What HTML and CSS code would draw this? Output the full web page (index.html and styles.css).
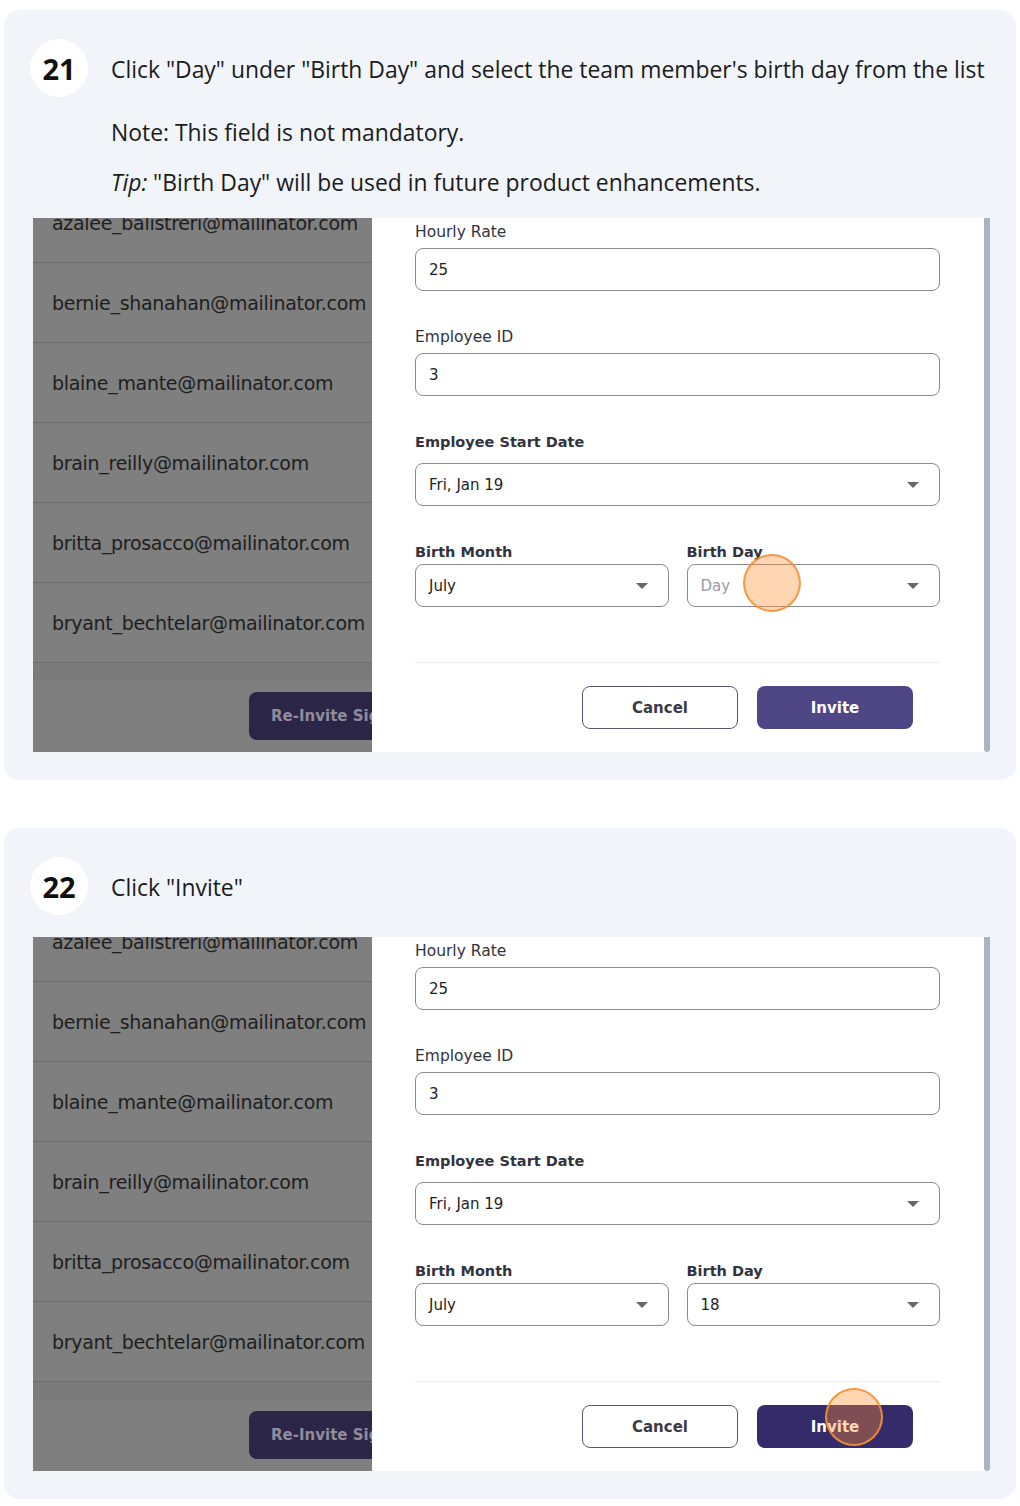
FILE: index.html
```html
<!DOCTYPE html>
<html lang="en">
<head>
    <meta charset="UTF-8">
    <meta name="viewport" content="width=device-width, initial-scale=1.0">
    <title>Invite Team Member - Guide</title>
    <link rel="stylesheet" href="styles.css">
</head>
<body>

    <!-- Step 21 -->
    <div class="step">
        <div class="step-head">
            <div class="step-num">21</div>
            <div class="step-text">
                <p>Click "Day" under "Birth Day" and select the team member's birth day from the list</p>
                <p class="note">Note: This field is not mandatory.</p>
                <p class="tip"><em>Tip:</em> "Birth Day" will be used in future product enhancements.</p>
            </div>
        </div>

        <div class="shot">
            <div class="member-list">
                <div class="member first">azalee_balistreri@mailinator.com</div>
                <div class="member">bernie_shanahan@mailinator.com</div>
                <div class="member">blaine_mante@mailinator.com</div>
                <div class="member">brain_reilly@mailinator.com</div>
                <div class="member">britta_prosacco@mailinator.com</div>
                <div class="member">bryant_bechtelar@mailinator.com</div>
                <div class="member-gap"></div>
                <div class="member-foot">
                    <button class="reinvite-btn">Re-Invite Signups</button>
                </div>
            </div>

            <div class="invite-form">
                <div class="field">
                    <label>Hourly Rate</label>
                    <div class="input">25</div>
                </div>
                <div class="field">
                    <label>Employee ID</label>
                    <div class="input">3</div>
                </div>
                <div class="field date">
                    <label>Employee Start Date</label>
                    <div class="input select">Fri, Jan 19</div>
                </div>
                <div class="field-row">
                    <div class="field">
                        <label>Birth Month</label>
                        <div class="input select">July</div>
                    </div>
                    <div class="field">
                        <label>Birth Day</label>
                        <div class="input select placeholder">Day</div>
                    </div>
                </div>
                <div class="form-actions">
                    <button class="cancel-btn">Cancel</button>
                    <button class="invite-btn">Invite</button>
                </div>
            </div>

            <div class="scrollbar"></div>

            <!-- click marker -->
            <div class="click-dot" style="left: 710px; top: 336px;"></div>
        </div>
    </div>

    <!-- Step 22 -->
    <div class="step">
        <div class="step-head">
            <div class="step-num">22</div>
            <div class="step-text">
                <p>Click "Invite"</p>
            </div>
        </div>

        <div class="shot">
            <div class="member-list">
                <div class="member first">azalee_balistreri@mailinator.com</div>
                <div class="member">bernie_shanahan@mailinator.com</div>
                <div class="member">blaine_mante@mailinator.com</div>
                <div class="member">brain_reilly@mailinator.com</div>
                <div class="member">britta_prosacco@mailinator.com</div>
                <div class="member">bryant_bechtelar@mailinator.com</div>
                <div class="member-gap"></div>
                <div class="member-foot">
                    <button class="reinvite-btn">Re-Invite Signups</button>
                </div>
            </div>

            <div class="invite-form">
                <div class="field">
                    <label>Hourly Rate</label>
                    <div class="input">25</div>
                </div>
                <div class="field">
                    <label>Employee ID</label>
                    <div class="input">3</div>
                </div>
                <div class="field date">
                    <label>Employee Start Date</label>
                    <div class="input select">Fri, Jan 19</div>
                </div>
                <div class="field-row">
                    <div class="field">
                        <label>Birth Month</label>
                        <div class="input select">July</div>
                    </div>
                    <div class="field">
                        <label>Birth Day</label>
                        <div class="input select">18</div>
                    </div>
                </div>
                <div class="form-actions">
                    <button class="cancel-btn">Cancel</button>
                    <button class="invite-btn hover">Invite</button>
                </div>
            </div>

            <div class="scrollbar"></div>

            <div class="click-dot" style="left: 792px; top: 451px;"></div>
        </div>
    </div>

</body>
</html>
```

FILE: styles.css
```css
/* Global styles */
* {
    box-sizing: border-box;
}

body {
    font-family: "Open Sans", Arial, sans-serif;
    background-color: #fff;
    margin: 0;
    padding: 10px 4px;
}

/* Step card */
.step {
    background-color: #f1f4f9;
    border-radius: 16px;
    padding: 29px 26px 28px 29px;
    margin-bottom: 48px;
}

.step-head {
    display: flex;
    align-items: flex-start;
    gap: 23px;
    margin-bottom: 19px;
}

.step-num {
    flex: none;
    width: 58px;
    height: 58px;
    margin: 0 0 3px -3px;
    border-radius: 50%;
    background-color: #fff;
    display: flex;
    align-items: center;
    justify-content: center;
    font-size: 29px;
    font-weight: 700;
    color: #111;
}

.step-text {
    padding-top: 15px;
}

.step-text p {
    margin: 0;
    font-size: 22.9px;
    line-height: 32px;
    color: #1b1b1b;
    white-space: nowrap;
}

.step-text .note {
    margin-top: 31px;
}

.step-text .tip {
    margin-top: 18px;
}

/* Screenshot of the app */
.shot {
    position: relative;
    display: flex;
    height: 534px;
    overflow: hidden;
    background-color: #fff;
    font-family: "DejaVu Sans", sans-serif;
}

/* Dimmed member list behind the modal */
.member-list {
    flex: none;
    width: 339px;
    background-color: #7f7f7f;
    display: flex;
    flex-direction: column;
}

.member {
    height: 80px;
    flex: none;
    border-bottom: 1px solid #6c6c6c;
    padding-left: 19px;
    display: flex;
    align-items: center;
    font-size: 19px;
    color: #1e1e1e;
    white-space: nowrap;
    letter-spacing: -0.3px;
}

.member.first {
    height: 45px;
    align-items: flex-start;
    line-height: 10px;
}

.member-gap {
    height: 17px;
    flex: none;
    border-bottom: 1px solid #777;
    background-color: #7b7b7b;
}

.member-foot {
    display: flex;
    justify-content: flex-start;
    padding: 12px 0 0 216px;
}

.reinvite-btn {
    height: 48px;
    width: 160px;
    flex: none;
    border: none;
    border-radius: 8px;
    background-color: #2b2547;
    color: #8f8d9c;
    font-family: "DejaVu Sans", sans-serif;
    font-size: 15px;
    font-weight: 700;
    text-align: left;
    padding-left: 22px;
    white-space: nowrap;
}

/* Invite modal form */
.invite-form {
    flex: none;
    width: 612px;
    padding: 5px 44px 0 43px;
    background-color: #fff;
}

.field label {
    display: block;
    font-size: 15.5px;
    line-height: 18px;
    color: #33333d;
    margin-bottom: 7px;
}

.field {
    margin-bottom: 37px;
}

.field.date label {
    font-weight: 700;
    font-size: 14.5px;
    margin-bottom: 12px;
}

.input {
    height: 43px;
    border: 1px solid #8a8a92;
    border-radius: 8px;
    padding-left: 13px;
    display: flex;
    align-items: center;
    font-size: 15px;
    color: #1e1e1e;
}

.input.select {
    position: relative;
}

/* dropdown caret */
.input.select::after {
    content: "";
    position: absolute;
    right: 20px;
    top: 18px;
    border-left: 6px solid transparent;
    border-right: 6px solid transparent;
    border-top: 6px solid #67676f;
}

.input.placeholder {
    color: #9a9aa6;
}

.field-row {
    display: flex;
    gap: 18px;
}

.field-row .field {
    flex: 1;
    margin-bottom: 0;
}

.field-row .field label {
    font-weight: 700;
    font-size: 14.5px;
    margin-bottom: 3px;
}

.form-actions {
    margin-top: 55px;
    border-top: 1px solid #ececec;
    padding: 23px 27px 0 0;
    display: flex;
    justify-content: flex-end;
    gap: 19px;
}

.cancel-btn,
.invite-btn {
    width: 156px;
    height: 43px;
    border-radius: 8px;
    font-family: "DejaVu Sans", sans-serif;
    font-size: 15px;
    font-weight: 700;
}

.cancel-btn {
    background-color: #fff;
    border: 1px solid #5c5874;
    color: #3b3b45;
}

.invite-btn {
    background-color: #4f4785;
    border: none;
    color: #fff;
}

.invite-btn.hover {
    background-color: #352a6a;
}

.scrollbar {
    flex: none;
    width: 6px;
    background-color: #a9b3c3;
    border-radius: 0 0 3px 3px;
}

/* Orange marker where the click happens */
.click-dot {
    position: absolute;
    width: 58px;
    height: 58px;
    border-radius: 50%;
    background-color: rgba(255, 141, 47, 0.37);
    border: 2px solid rgba(245, 145, 55, 0.9);
}
```
